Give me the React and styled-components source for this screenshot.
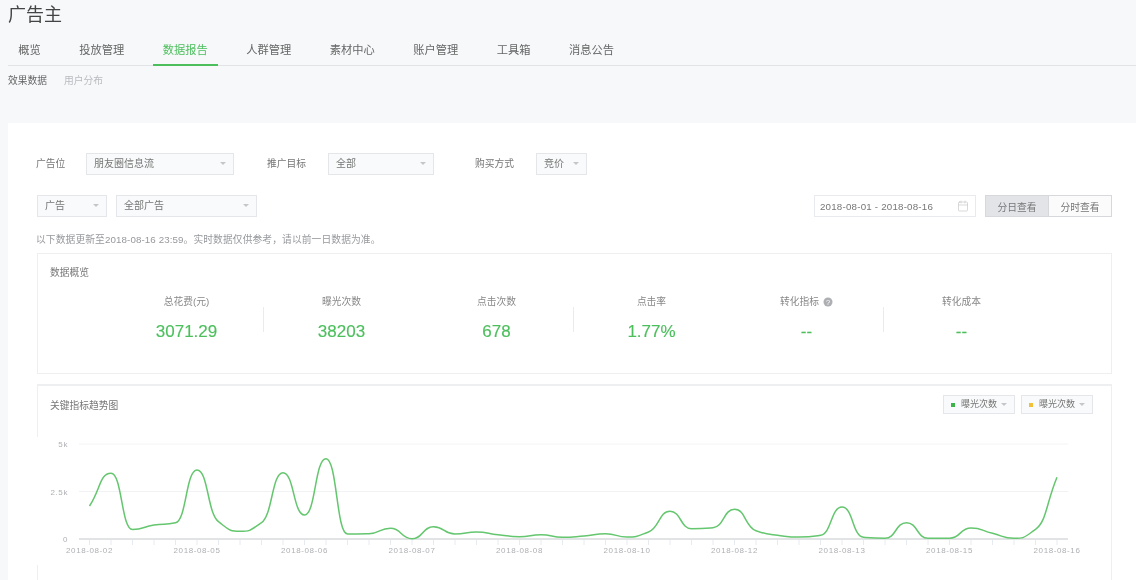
import styled, { createGlobalStyle } from "styled-components";
import { Calendar } from "lucide-react";

const GlobalStyle = createGlobalStyle`
  html, body {
    margin: 0;
    height: 580px;
    overflow: hidden;
    background: #f7f8fa;
  }
  body {
    font-family: "Liberation Sans", "Noto Sans CJK SC", sans-serif;
    color: #555;
  }
  * {
    box-sizing: border-box;
  }
`;

const Page = styled.div`
  height: 580px;
  overflow: hidden;
  background: #f7f8fa;
  filter: blur(0.5px);
`;

const Header = styled.div`
  height: 123px;
  padding-left: 8px;
`;

const Title = styled.h1`
  margin: 0;
  height: 30px;
  font-size: 18px;
  font-weight: 400;
  line-height: 30px;
  color: #444;
`;

const Tabs = styled.div`
  display: flex;
  gap: 18px;
  height: 36px;
  border-bottom: 1px solid #e1e3e6;
`;

const Tab = styled.div`
  height: 36px;
  padding: 0 10.25px;
  font-size: 11.25px;
  line-height: 41px;
  color: ${(p) => (p.$active ? "#4cbf5c" : "#666")};
  border-bottom: 2px solid ${(p) => (p.$active ? "#4cbf5c" : "transparent")};
`;

const SubTabs = styled.div`
  display: flex;
  gap: 17px;
  padding-top: 8px;
  font-size: 9.75px;
  line-height: 14px;
`;

const SubTab = styled.div`
  color: ${(p) => (p.$active ? "#666" : "#b9bbbf")};
`;

const Card = styled.div`
  margin-left: 8px;
  height: 480px;
  padding: 30px 24px 0 29px;
  background: #fff;
`;

const FilterRow = styled.div`
  display: flex;
  align-items: center;
  height: 22px;
  margin-bottom: 20px;
`;

const Label = styled.div`
  width: ${(p) => p.$w}px;
  margin-left: -1px;
  padding-bottom: 3px;
  flex: none;
  font-size: 9.75px;
  color: #777;
`;

const Select = styled.div`
  position: relative;
  flex: none;
  display: flex;
  align-items: center;
  width: ${(p) => p.$w}px;
  height: ${(p) => p.$h || 22}px;
  margin-left: ${(p) => p.$ml || 0}px;
  margin-right: ${(p) => p.$mr || 0}px;
  padding: 0 0 3px 7px;
  font-size: ${(p) => p.$fs || 10}px;
  color: #777;
  background: #f9fafb;
  border: 1px solid #e4e6ea;
  &::after {
    content: "";
    position: absolute;
    right: 7px;
    top: 50%;
    margin-top: -2px;
    border-left: 3px solid transparent;
    border-right: 3px solid transparent;
    border-top: 3px solid #c4c6ca;
  }
`;

const Spacer = styled.div`
  flex: 1;
`;

const DateInput = styled.div`
  display: flex;
  align-items: center;
  justify-content: space-between;
  width: 162px;
  height: 22px;
  padding: 0 6px 0 5px;
  margin-right: 9px;
  font-size: 9.75px;
  letter-spacing: 0.2px;
  color: #777;
  background: #fff;
  border: 1px solid #e8eaed;
`;

const ButtonGroup = styled.div`
  display: flex;
  width: 127px;
  height: 22px;
  border: 1px solid #d6d8db;
`;

const ViewButton = styled.div`
  flex: 1;
  font-size: 9.75px;
  line-height: 23px;
  text-align: center;
  color: #777;
  background: ${(p) => (p.$active ? "#e2e4e7" : "#fbfbfc")};
  border-right: ${(p) => (p.$active ? "1px solid #d6d8db" : "none")};
`;

const Note = styled.div`
  margin: -4px 0 6px -1px;
  height: 14px;
  font-size: 9.75px;
  letter-spacing: 0.1px;
  line-height: 14px;
  color: #96989c;
`;

const Overview = styled.div`
  height: 121px;
  margin-bottom: 10px;
  padding: 12px 0 0 12px;
  border: 1px solid #eeeff1;
`;

const CardTitle = styled.div`
  font-size: 9.75px;
  line-height: 14px;
  color: #777;
`;

const ChartTitle = styled(CardTitle)`
  margin-top: 2px;
`;

const Metrics = styled.div`
  display: grid;
  grid-template-columns: repeat(6, 155px);
  margin: 15px 0 0 59px;
`;

const Metric = styled.div`
  position: relative;
  text-align: center;
  &:nth-child(odd)::after {
    content: "";
    position: absolute;
    right: 0;
    top: 12px;
    width: 1px;
    height: 25px;
    background: #e9ebee;
  }
`;

const MetricLabel = styled.div`
  display: flex;
  justify-content: center;
  align-items: center;
  gap: 4px;
  height: 14px;
  font-size: 9.75px;
  line-height: 14px;
  color: #888;
`;

const MetricValue = styled.div`
  margin-top: 13px;
  font-size: 17px;
  line-height: 20px;
  color: #4cbf5c;
  -webkit-text-stroke: 0.15px #4cbf5c;
`;

const ChartCard = styled.div`
  height: 260px;
  border: 1px solid #eeeff1;
  border-top-width: 2px;
`;

const ChartHeader = styled.div`
  display: flex;
  align-items: center;
  height: 51px;
  padding: 9px 18px 23px 12px;
`;

const Dot = styled.span`
  width: 4px;
  height: 4px;
  margin: 3px 6px 0 0;
  background: ${(p) => p.$color};
`;

const ChartSvg = styled.svg`
  display: block;
  margin-left: -1px;
  background: #fff;
`;

const AxisText = styled.text`
  font-family: "Liberation Sans", sans-serif;
  font-size: 8px;
  fill: #aeb0b4;
  letter-spacing: 0.6px;
`;

const tabs = ["概览", "投放管理", "数据报告", "人群管理", "素材中心", "账户管理", "工具箱", "消息公告"];

const metrics = [
  { label: "总花费(元)", value: "3071.29" },
  { label: "曝光次数", value: "38203" },
  { label: "点击次数", value: "678" },
  { label: "点击率", value: "1.77%" },
  { label: "转化指标", value: "--", help: true },
  { label: "转化成本", value: "--" },
];

const dates = ["02", "05", "06", "07", "08", "10", "12", "13", "15", "16"];

const X0 = 89.5;
const STEP = 21.5;
const points = [
  506, 473.3, 529.5, 525, 522.7, 470, 521.7, 531.3, 522.7, 472.7, 515, 458.7,
  534, 533.7, 528.3, 538.7, 526.7, 534, 532, 534.7, 536.7, 534.7, 537.3, 536,
  533.7, 537, 532, 511.3, 528.7, 527.7, 509.3, 530.7, 535.3, 537, 535.3, 507,
  537.3, 538.3, 522.7, 538.3, 538.3, 528, 533.3, 538.3, 529.3, 477.3,
];

// monotone spline, flat at the peaks like the chart lib draws it
function linePath(ys) {
  const slope = ys.map((y, i) => {
    if (i === 0) return (ys[1] - y) / STEP;
    if (i === ys.length - 1) return (y - ys[i - 1]) / STEP;
    const d0 = y - ys[i - 1];
    const d1 = ys[i + 1] - y;
    if (d0 * d1 <= 0) return 0;
    return (2 * d0 * d1) / (d0 + d1) / STEP;
  });
  let d = `M${X0} ${ys[0]}`;
  for (let i = 1; i < ys.length; i++) {
    const x1 = X0 + STEP * (i - 1);
    const x2 = x1 + STEP;
    const c = STEP * 0.52;
    d += ` C${x1 + c} ${ys[i - 1] + slope[i - 1] * c} ${x2 - c} ${ys[i] - slope[i] * c} ${x2} ${ys[i]}`;
  }
  return d;
}

const HelpMark = styled.text`
  font-family: "Liberation Sans", sans-serif;
  font-size: 7.5px;
  fill: #fff;
`;

function HelpIcon() {
  return (
    <svg width="10" height="10" viewBox="0 0 10 10">
      <circle cx="5" cy="5" r="4.5" fill="#adafb3" />
      <HelpMark x="5" y="7.6" textAnchor="middle">?</HelpMark>
    </svg>
  );
}

function TrendChart() {
  return (
    <ChartSvg width="1074" height="128" viewBox="37 437 1074 128">
      <line x1="79" x2="1068" y1="444" y2="444" stroke="#f3f4f6" />
      <line x1="79" x2="1068" y1="491.5" y2="491.5" stroke="#f1f2f4" />
      <AxisText x="68" y="447" textAnchor="end">5k</AxisText>
      <AxisText x="68" y="495" textAnchor="end">2.5k</AxisText>
      <AxisText x="68" y="542" textAnchor="end">0</AxisText>
      {points.map((_, i) => (
        <line
          key={i}
          x1={X0 + STEP * i}
          x2={X0 + STEP * i}
          y1="540"
          y2="545"
          stroke="#e6eaf1"
        />
      ))}
      <line x1="79" x2="1068" y1="539" y2="539" stroke="#e2e3e5" strokeWidth="2" />
      {dates.map((d, i) => (
        <AxisText key={d} x={X0 + STEP * 5 * i} y="553" textAnchor="middle">
          2018-08-{d}
        </AxisText>
      ))}
      <path d={linePath(points)} fill="none" stroke="#64c66e" strokeWidth="1.5" />
    </ChartSvg>
  );
}

export default function App() {
  return (
    <Page>
      <GlobalStyle />
      <Header>
        <Title>广告主</Title>
        <Tabs>
          {tabs.map((t) => (
            <Tab key={t} $active={t === "数据报告"}>{t}</Tab>
          ))}
        </Tabs>
        <SubTabs>
          <SubTab $active>效果数据</SubTab>
          <SubTab>用户分布</SubTab>
        </SubTabs>
      </Header>
      <Card>
        <FilterRow>
          <Label $w={50}>广告位</Label>
          <Select $w={148} $mr={34}>朋友圈信息流</Select>
          <Label $w={61}>推广目标</Label>
          <Select $w={106} $mr={42}>全部</Select>
          <Label $w={61}>购买方式</Label>
          <Select $w={51}>竞价</Select>
        </FilterRow>
        <FilterRow>
          <Select $w={70} $mr={9}>广告</Select>
          <Select $w={141}>全部广告</Select>
          <Spacer />
          <DateInput>
            2018-08-01 - 2018-08-16
            <Calendar size={12} color="#ccc" strokeWidth={1.5} />
          </DateInput>
          <ButtonGroup>
            <ViewButton $active>分日查看</ViewButton>
            <ViewButton>分时查看</ViewButton>
          </ButtonGroup>
        </FilterRow>
        <Note>以下数据更新至2018-08-16 23:59。实时数据仅供参考，请以前一日数据为准。</Note>
        <Overview>
          <CardTitle>数据概览</CardTitle>
          <Metrics>
            {metrics.map((m) => (
              <Metric key={m.label}>
                <MetricLabel>
                  {m.label}
                  {m.help && <HelpIcon />}
                </MetricLabel>
                <MetricValue>{m.value}</MetricValue>
              </Metric>
            ))}
          </Metrics>
        </Overview>
        <ChartCard>
          <ChartHeader>
            <ChartTitle>关键指标趋势图</ChartTitle>
            <Spacer />
            <Select $w={72} $h={19} $mr={6} $fs={9}>
              <Dot $color="#3cb44a" />曝光次数
            </Select>
            <Select $w={72} $h={19} $fs={9}>
              <Dot $color="#f2c037" />曝光次数
            </Select>
          </ChartHeader>
          <TrendChart />
        </ChartCard>
      </Card>
    </Page>
  );
}
